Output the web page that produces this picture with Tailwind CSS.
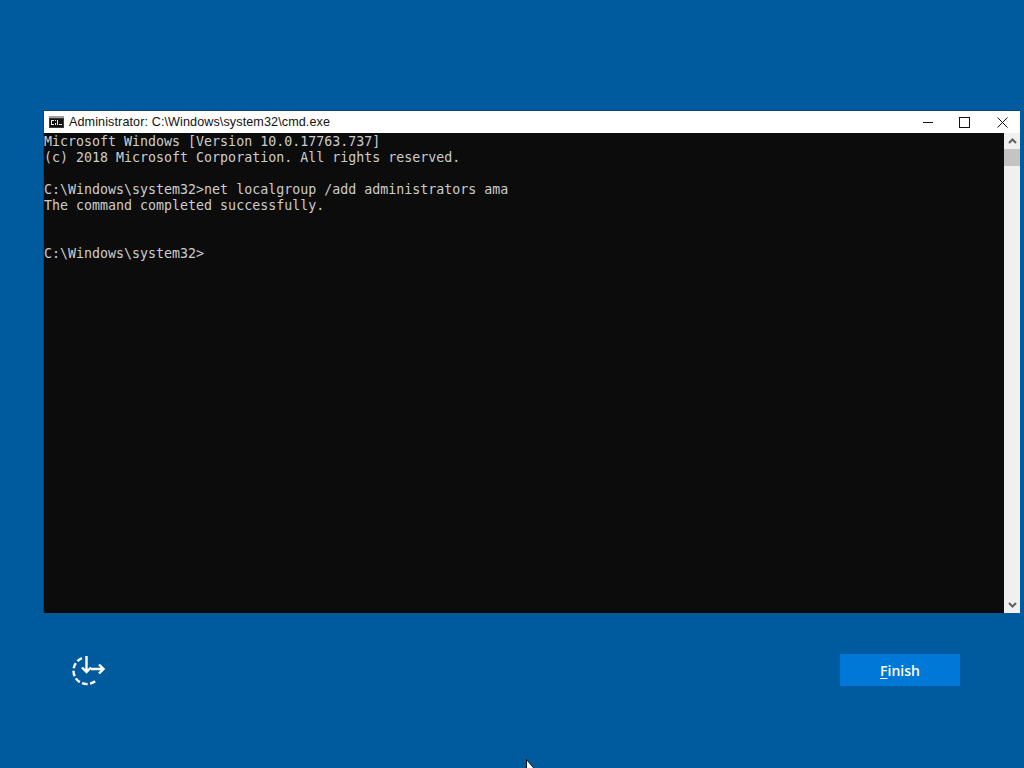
<!DOCTYPE html>
<html>
<head>
<meta charset="utf-8">
<script src="https://cdn.jsdelivr.net/npm/@tailwindcss/browser@4"></script>
</head>
<body class="relative w-[1024px] h-[768px] overflow-hidden bg-[#005a9e]">
  <div class="pt-[110px] pl-[43px] w-[1024px]">
    <div class="w-[977px] h-[503px] flex flex-col border-t border-l border-[#00477d]">
      <div class="h-[22px] bg-white flex items-center pl-[5px] shrink-0">
        <svg width="15" height="12" viewBox="0 0 15 12" class="mr-[5px]">
          <rect x="0" y="0" width="15" height="12" fill="#3a3a3a"/>
          <rect x="0" y="0" width="15" height="2" fill="#a0a0a0"/>
          <rect x="1" y="3" width="13" height="8" fill="#111"/>
          <path d="M2 4h3v1H3v3h2v1H2zM6 4h1v1H6zM6 7h1v2H6zM8 4h1v5H8zM10 8h3v1h-3z" fill="#e8e8e8"/>
        </svg>
        <span class="font-['Liberation_Sans',sans-serif] text-[12.6px] leading-[22px] text-[#111] tracking-[0.1px]">Administrator: C:\Windows\system32\cmd.exe</span>
        <div class="ml-auto flex items-center h-full">
          <svg width="10" height="10" viewBox="0 0 10 10" class="mr-[26px]"><path d="M0 5.5h10" stroke="#111" stroke-width="1"/></svg>
          <svg width="11" height="11" viewBox="0 0 11 11" class="mr-[27px]"><rect x="0.5" y="0.5" width="10" height="10" fill="none" stroke="#111" stroke-width="1"/></svg>
          <svg width="11" height="11" viewBox="0 0 11 11" class="mr-[12px]"><path d="M0.5 0.5l10 10M10.5 0.5l-10 10" stroke="#111" stroke-width="1"/></svg>
        </div>
      </div>
      <div class="flex flex-1 min-h-0">
        <div class="flex-1 bg-[#0c0c0c] text-[#cccccc] font-['DejaVu_Sans_Mono',monospace] text-[13.3px] leading-[16px] whitespace-pre pt-[1px]">Microsoft Windows [Version 10.0.17763.737]
(c) 2018 Microsoft Corporation. All rights reserved.

C:\Windows\system32&gt;net localgroup /add administrators ama
The command completed successfully.


C:\Windows\system32&gt;</div>
        <div class="w-[16px] bg-[#f0f0f0] flex flex-col items-center">
          <div class="h-[16px] flex items-center justify-center">
            <svg width="9" height="6" viewBox="0 0 9 6"><path d="M1 5l3.5-3.5L8 5" fill="none" stroke="#606060" stroke-width="2"/></svg>
          </div>
          <div class="w-[16px] h-[17px] bg-[#c4c4c4]"></div>
          <div class="mt-auto h-[17px] flex items-center justify-center">
            <svg width="9" height="6" viewBox="0 0 9 6"><path d="M1 1l3.5 3.5L8 1" fill="none" stroke="#606060" stroke-width="2"/></svg>
          </div>
        </div>
      </div>
    </div>
    <div class="flex items-center justify-between mt-[41px] w-[917px]">
      <svg width="34" height="32" viewBox="0 0 34 32" class="ml-[28px]" fill="none" stroke="#fff" stroke-width="2.4">
        <path d="M11 4.2A13.4 13.4 0 1 0 25.5 26" stroke-dasharray="5.5 2.5"/>
        <path d="M15.5 2v16M11 13.5l4.5 4.5 4.5-4.5"/>
        <path d="M20 15h12.5M28 10.5l4.5 4.5-4.5 4.5"/>
      </svg>
      <button class="w-[120px] h-[32px] pt-[2px] bg-[#0078d7] text-white font-['Open_Sans',sans-serif] font-semibold text-[14px] leading-[30px] text-center"><span class="underline underline-offset-2">F</span>inish</button>
    </div>
  </div>
  <svg class="absolute left-[526px] top-[759px]" width="12" height="10" viewBox="0 0 12 10"><path d="M0.5 0.5V14L4 10.5h5z" fill="#fff" stroke="#111" stroke-width="1"/></svg>
</body>
</html>
